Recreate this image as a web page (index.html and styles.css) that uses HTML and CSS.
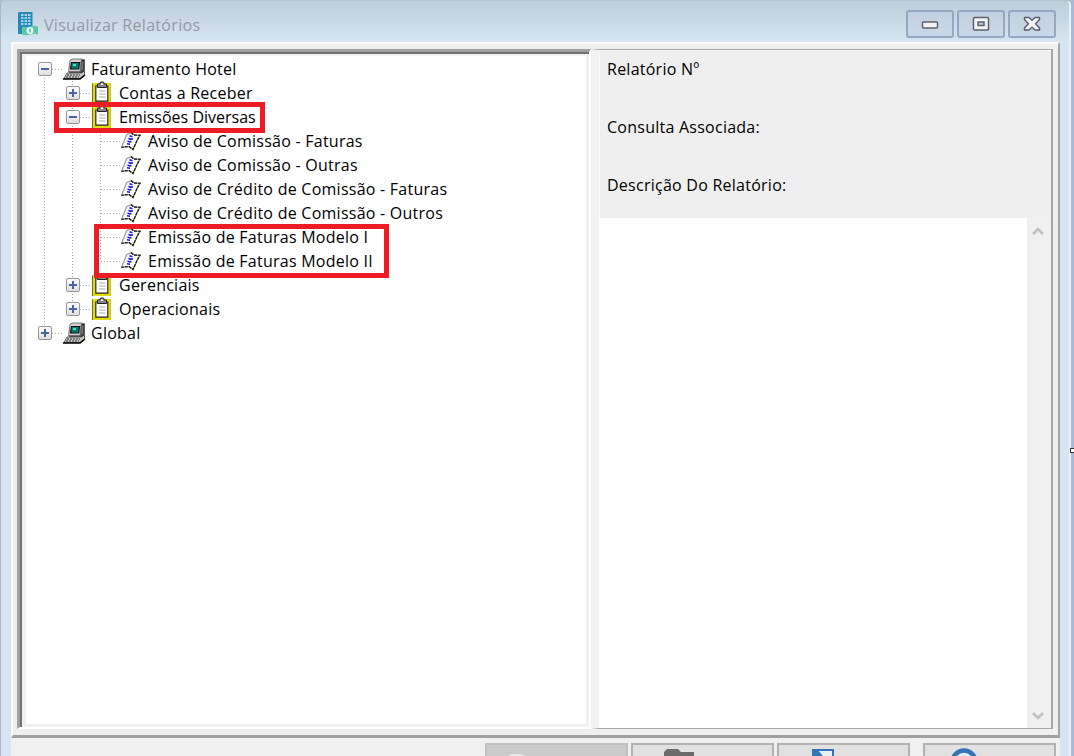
FILE: index.html
```
<!DOCTYPE html>
<html lang="pt-BR">
<head>
  <meta charset="UTF-8" />
  <meta name="viewport" content="width=device-width, initial-scale=1.0" />
  <title>Visualizar Relatórios</title>
  <link rel="stylesheet" href="styles.css">
</head>
<body>

  <!-- Shared icons -->
  <svg class="sprite" width="0" height="0">
    <symbol id="computer" viewBox="0 0 23 22">
      <path d="M7 2.500L9 1h11l1.500 2v10l-2 2H6z" fill="#555"/>
      <path d="M7 2.500L9 1h10.500L18 3 17 13.500H5.500z" fill="#cfcfcf" stroke="#666" stroke-width=".8"/>
      <path d="M19 3l2-1v10l-2.500 2.500" fill="#777" stroke="#222" stroke-width="1.200"/>
      <path d="M8.500 4.500h8l-.8 6.500H7.500z" fill="#077a72" stroke="#111" stroke-width="1.200"/>
      <path d="M10 6h3v2h-3z" fill="#4ed9cf"/>
      <path d="M4 15h14.500l3-2v4L17 20.500H1z" fill="#c8c8c8" stroke="#444" stroke-width=".8"/>
      <path d="M4 17h13M3 19h13" stroke="#333" stroke-width="1.100" stroke-dasharray="2 1"/>
      <path d="M0 21h17l5-4" fill="none" stroke="#000" stroke-width="1.600"/>
    </symbol>
    <symbol id="clipboard" viewBox="0 0 20 24">
      <path d="M0 2.500h19V23H0z" fill="#222"/>
      <path d="M2 3.500h15.500v18H2z" fill="#fff" stroke="#e4dc12" stroke-width="2.800"/>
      <path d="M3.800 5h12v15.200h-12z" fill="#fff" stroke="#222" stroke-width="1.200"/>
      <path d="M5.500 3h2l1-2h3l1 2h2v3.500h-9z" fill="#888" stroke="#222"/>
      <path d="M9 2.500h2v1.500H9z" fill="#fff"/>
      <path d="M7 10h6.500M7 13h6.500M7 16h6.500" stroke="#aaa" stroke-width="1.200"/>
    </symbol>
    <symbol id="report" viewBox="0 0 22 20">
      <path d="M6.500 4L11 1.500l3 2.500 6 .3-2.500 4.200L13 18.500l-4-3-7.500.8L4 10.500z" fill="#fff" stroke="#999" stroke-width="1.200"/>
      <path d="M11 1.500l3 2.500 6 .3-2.500 4.200L13 18.500l-4-3-7.500.8" fill="none" stroke="#111" stroke-width="1.300" stroke-dasharray="3 1"/>
      <path d="M9.500 4.800l3 1M8.500 7.300l2 1 2.500-.5M7.500 10l2 1 2-.5M7 12.800l3 .4" fill="none" stroke="#1717ff" stroke-width="1.600"/>
    </symbol>
  </svg>

  <div class="window">
    <!-- Title bar -->
    <header class="titlebar">
      <svg class="app-icon" width="21" height="24" viewBox="0 0 21 24">
        <path d="M1 0h13.500v22H0V1z" fill="#2389b7"/>
        <path d="M3 2h2.500v2H3zm3.500 0H9v2H6.500zM10 2h2.500v2H10zM3 5h2.500v2H3zm3.500 0H9v2H6.500zM10 5h2.500v2H10zM3 8h2.500v2H3zm3.500 0H9v2H6.500zM10 8h2.500v2H10zM3 11h2.500v2H3zm3.500 0H9v2H6.500zM10 11h2.500v2H10z" fill="#a5d3e9"/>
        <path d="M4 14.500q4 1.500 8 0t8 0v8q-4-1.500-8 0t-8 0z" fill="#5fc8a8"/>
        <circle cx="12" cy="18.500" r="3.400" fill="#e6fff7"/>
        <path d="M12 16.500v4M6 18.500h1M17 18.500h1" stroke="#4ab894" stroke-width="1.500"/>
      </svg>
      <h1>Visualizar Relatórios</h1>
      <div class="controls">
        <button><svg width="18" height="16" viewBox="0 0 18 16"><rect x="1.500" y="6" width="15" height="6" rx="1" fill="#f4f4f4" stroke="#5c6070" stroke-width="1.500"/></svg></button>
        <button><svg width="18" height="16" viewBox="0 0 18 16"><rect x="1.500" y="1.500" width="15" height="12.500" rx="1" fill="#f4f4f4" stroke="#5c6070" stroke-width="1.500"/><rect x="6" y="6" width="6" height="3.500" fill="#bccbdd" stroke="#5c6070" stroke-width="1.500"/></svg></button>
        <button><svg width="18" height="16" viewBox="0 0 18 16"><path d="M1.500 1.500h4.500L9 4.300l3-2.800h4.500v2L12.600 7.800l3.900 4.200v2H12L9 11.200 6 14H1.500v-2l3.900-4.200L1.500 3.500z" fill="#f4f4f4" stroke="#5c6070" stroke-width="1.500" stroke-linejoin="round"/></svg></button>
      </div>
    </header>

    <main class="client">
      <div class="panes">
        <!-- Report tree -->
        <section class="tree-pane">
          <ul class="tree">
            <li>
              <div class="row"><span class="toggle"></span><i></i><svg class="pc"><use href="#computer"/></svg><span class="name">Faturamento Hotel</span></div>
              <ul>
                <li><div class="row"><span class="toggle plus"></span><i></i><svg class="clip"><use href="#clipboard"/></svg><span class="name">Contas a Receber</span></div></li>
                <li>
                  <div class="row"><span class="toggle"></span><i></i><svg class="clip"><use href="#clipboard"/></svg><span class="name tight">Emissões Diversas</span></div>
                  <ul class="reports">
                    <li><div class="row"><i></i><svg class="page"><use href="#report"/></svg><span class="name">Aviso de Comissão - Faturas</span></div></li>
                    <li><div class="row"><i></i><svg class="page"><use href="#report"/></svg><span class="name">Aviso de Comissão - Outras</span></div></li>
                    <li><div class="row"><i></i><svg class="page"><use href="#report"/></svg><span class="name">Aviso de Crédito de Comissão - Faturas</span></div></li>
                    <li><div class="row"><i></i><svg class="page"><use href="#report"/></svg><span class="name">Aviso de Crédito de Comissão - Outros</span></div></li>
                    <li><div class="row"><i></i><svg class="page"><use href="#report"/></svg><span class="name">Emissão de Faturas Modelo I</span></div></li>
                    <li><div class="row"><i></i><svg class="page"><use href="#report"/></svg><span class="name">Emissão de Faturas Modelo II</span></div></li>
                  </ul>
                </li>
                <li><div class="row"><span class="toggle plus"></span><i></i><svg class="clip"><use href="#clipboard"/></svg><span class="name">Gerenciais</span></div></li>
                <li><div class="row"><span class="toggle plus"></span><i></i><svg class="clip"><use href="#clipboard"/></svg><span class="name">Operacionais</span></div></li>
              </ul>
            </li>
            <li><div class="row"><span class="toggle plus"></span><i></i><svg class="pc"><use href="#computer"/></svg><span class="name">Global</span></div></li>
          </ul>
        </section>

        <!-- Report details -->
        <section class="details">
          <div class="labels">
            <p>Relatório Nº</p>
            <p>Consulta Associada:</p>
            <p>Descrição Do Relatório:</p>
          </div>
          <div class="memo">
            <div class="memo-text"></div>
            <div class="scrollbar">
              <svg width="12" height="10" viewBox="0 0 12 10"><path d="M1 8l5-5 5 5" fill="none" stroke="#bfbfbf" stroke-width="2.600"/></svg>
              <svg width="12" height="10" viewBox="0 0 12 10"><path d="M1 2l5 5 5-5" fill="none" stroke="#bfbfbf" stroke-width="2.600"/></svg>
            </div>
          </div>
        </section>
      </div>
    </main>

    <!-- Buttons -->
    <footer class="toolbar">
      <button class="wide disabled"><svg width="24" height="14" viewBox="0 0 24 14"><path d="M2 14V7l4-3h11l4 3v7" fill="#d6d6d6" stroke="#eee" stroke-width="1.500"/></svg></button>
      <button class="wide"><svg width="34" height="14" viewBox="0 0 34 14"><path d="M1 14V4l3-3h11l3 3h13v10z" fill="#6b6b6b"/></svg></button>
      <button class="exit"><svg width="24" height="14" viewBox="0 0 24 14"><path d="M2 2h20v12H2z" fill="#e8f0f8" stroke="#3675b5" stroke-width="2"/><path d="M1 1h5l11 13H1z" fill="#3675b5"/></svg></button>
      <button class="help"><svg width="30" height="14" viewBox="0 0 30 14"><circle cx="15" cy="14" r="11.500" fill="#e6edf4" stroke="#3675b5" stroke-width="4.500"/></svg></button>
    </footer>
  </div>

  <!-- Highlights -->
  <div class="mark mark-group"></div>
  <div class="mark mark-models"></div>
  <div class="handle"></div>

</body>
</html>
```
FILE: styles.css
```
/* General Reset */
* {
  margin: 0;
  padding: 0;
  box-sizing: border-box;
}
body {
  width: 1074px;
  height: 756px;
  overflow: hidden;
  position: relative;
  background: #a9bad2;
  font-family: "Open Sans", "Noto Sans", sans-serif;
  font-size: 16px;
  color: #000;
}
svg {
  display: block;
  flex: none;
}
.sprite {
  position: absolute;
}

/* Window frame */
.window {
  width: 1071px;
  height: 756px;
  padding: 0 9px 0 10px;
  border-left: 1px solid #a9b7c6;
  border-right: 2px solid #e9f1fa;
  border-top: 1px solid #b5c2d0;
  border-radius: 5px 5px 0 0;
  background: linear-gradient(#bfcddb, #d7e4f2 42px);
}
.titlebar {
  height: 41px;
  display: flex;
  align-items: flex-start;
  padding: 9px 4px 0 7px;
}
.app-icon {
  margin-top: 2px;
}
.titlebar h1 {
  margin-left: 5px;
  font-size: 16px;
  line-height: 30px;
  font-weight: normal;
  letter-spacing: 0.3px;
  color: #929aa3;
}
.controls {
  margin-left: auto;
  display: flex;
  gap: 3px;
}
.controls button {
  width: 48px;
  height: 28px;
  display: flex;
  align-items: center;
  justify-content: center;
  border: 2px solid #97a6c1;
  border-radius: 3px;
  background: linear-gradient(#c3d0df, #c9d7e7);
}

/* Client area */
.client {
  height: 696px;
  padding: 5px 5px 7px;
  background: #efefef;
  border-top: 2px solid #fafafa;
  border-left: 2px solid #fafafa;
  border-right: 2px solid #a5a5a5;
  border-bottom: 3px solid #a0a0a0;
}
.panes {
  display: flex;
  height: 680px;
  margin-left: -1px;
}

/* Tree */
.tree-pane {
  width: 574px;
  padding: 4px 3px 3px 6px;
  border: 2px solid #fff;
  border-width: 3px 2px 2px 3px;
  border-top-color: #a0a0a0;
  border-left-color: #a0a0a0;
  background: #f0f0f0;
  box-shadow: inset 2px 2px #707070;
}
.tree {
  height: 100%;
  padding: 1px 0 0 12px;
  background: #fff;
}
ul {
  list-style: none;
}
.tree ul {
  padding-left: 28px;
}
.tree li {
  background: repeating-linear-gradient(#aaa 0 1px, transparent 1px 3px) 6px 0 / 1px 100% no-repeat;
}
.tree li:last-child {
  background-size: 1px 12px;
}
.tree > li:first-child {
  background-position: 6px 12px;
}
.row {
  height: 24px;
  display: flex;
  align-items: center;
  white-space: nowrap;
}
.row i {
  width: 12px;
  height: 1px;
  background: repeating-linear-gradient(90deg, #aaa 0 1px, transparent 1px 3px);
}
.name {
  letter-spacing: 0.25px;
}
.tight {
  letter-spacing: 0;
}
.toggle {
  width: 14px;
  height: 14px;
  border: 1.500px solid #979797;
  border-radius: 2px;
  background: linear-gradient(#4b63a7, #4b63a7) center / 8px 2px no-repeat, linear-gradient(#fff, #dedede);
}
.toggle.plus {
  background: linear-gradient(#4b63a7, #4b63a7) center / 8px 2px no-repeat, linear-gradient(#4b63a7, #4b63a7) center / 2px 8px no-repeat, linear-gradient(#fff, #dedede);
}
.pc {
  width: 23px;
  height: 22px;
  margin: 0 5px 0 -1px;
}
.clip {
  width: 20px;
  height: 24px;
  margin-right: 7px;
}
.page {
  width: 22px;
  height: 20px;
  margin-right: 6px;
}
.reports .row {
  padding-left: 7px;
}
.reports .row i {
  width: 19px;
}

/* Details */
.details {
  flex: 1;
  display: flex;
  flex-direction: column;
  margin-left: 1px;
  border-left: 7px solid #f2f2f2;
  border-top: 1px solid #a5a5a5;
  border-right: 2px solid #a5a5a5;
  border-bottom: 1px solid #a5a5a5;
}
.labels {
  height: 168px;
  padding: 7px 7px;
  border-left: 1px solid #fafafa;
  border-top: 1px solid #fafafa;
  letter-spacing: 0.25px;
}
.labels p {
  height: 58px;
  line-height: 22px;
}
.memo {
  flex: 1;
  display: flex;
  background: #fff;
}
.memo-text {
  flex: 1;
}
.scrollbar {
  width: 24px;
  padding: 8px 2px 7px 0;
  display: flex;
  flex-direction: column;
  align-items: center;
  justify-content: space-between;
  background: #f0f0f0;
}

/* Buttons */
.toolbar {
  height: 18px;
  padding: 5px 4px 0 0;
  display: flex;
  justify-content: flex-end;
  background: #f0f0f0;
  overflow: hidden;
}
.toolbar button {
  width: 133px;
  height: 40px;
  flex: none;
  display: flex;
  align-items: flex-start;
  padding-top: 3px;
  background: #e1e1e1;
  border: 2px solid #b2b2b2;
}
.toolbar .wide {
  width: 143px;
  margin-right: 3px;
  padding-left: 30px;
}
.toolbar .disabled {
  background: #cbcbcb;
  border-color: #c0c0c0;
  padding-left: 18px;
  padding-top: 6px;
}
.toolbar .exit {
  margin-right: 13px;
  padding-left: 32px;
}
.toolbar .help {
  padding-left: 24px;
}

/* Highlights */
.mark {
  position: absolute;
  border: 5px solid #ed1c24;
}
.mark-group {
  left: 54px;
  top: 102px;
  width: 211px;
  height: 31px;
}
.mark-models {
  left: 94px;
  top: 224px;
  width: 295px;
  height: 54px;
}
.handle {
  position: absolute;
  left: 1070px;
  top: 448px;
  width: 6px;
  height: 5px;
  border: 1px solid #333;
  background: #fff;
}
```
